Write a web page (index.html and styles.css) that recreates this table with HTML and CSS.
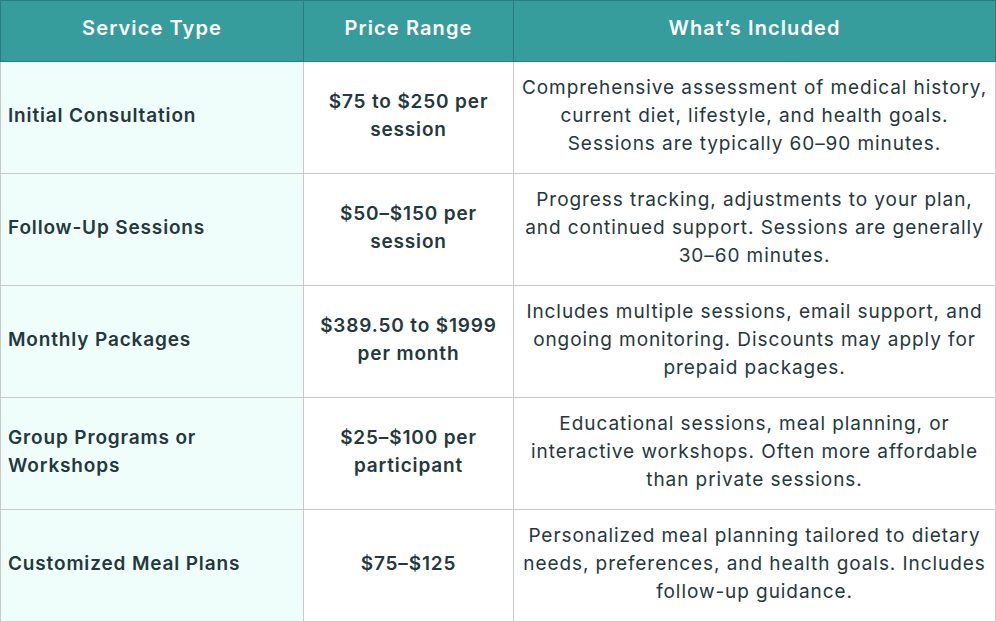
FILE: index.html
```html
<!DOCTYPE html>
<html lang="en">
<head>
<meta charset="utf-8">
<title>Nutritionist Pricing</title>
<link rel="stylesheet" href="styles.css">
</head>
<body>
<table class="pricing">
  <colgroup>
    <col class="c1"><col class="c2"><col class="c3">
  </colgroup>
  <thead>
    <tr>
      <th>Service Type</th>
      <th>Price Range</th>
      <th>What’s Included</th>
    </tr>
  </thead>
  <tbody>
    <tr>
      <td class="svc">Initial Consultation</td>
      <td class="price">$75 to $250 per session</td>
      <td class="desc">Comprehensive assessment of medical history, current diet, lifestyle, and health goals. Sessions are typically 60–90 minutes.</td>
    </tr>
    <tr>
      <td class="svc">Follow-Up Sessions</td>
      <td class="price">$50–$150 per session</td>
      <td class="desc">Progress tracking, adjustments to your plan, and continued support. Sessions are generally 30–60 minutes.</td>
    </tr>
    <tr>
      <td class="svc">Monthly Packages</td>
      <td class="price">$389.50 to $1999 per month</td>
      <td class="desc">Includes multiple sessions, email support, and ongoing monitoring. Discounts may apply for prepaid packages.</td>
    </tr>
    <tr>
      <td class="svc">Group Programs or Workshops</td>
      <td class="price">$25–$100 per participant</td>
      <td class="desc">Educational sessions, meal planning, or interactive workshops. Often more affordable than private sessions.</td>
    </tr>
    <tr>
      <td class="svc">Customized Meal Plans</td>
      <td class="price">$75–$125</td>
      <td class="desc">Personalized meal planning tailored to dietary needs, preferences, and health goals. Includes follow-up guidance.</td>
    </tr>
  </tbody>
</table>
</body>
</html>
```

FILE: styles.css
```css
html, body {
  margin: 0;
  padding: 0;
  background: #ffffff;
}
body {
  font-family: "Inter", "Noto Sans", sans-serif;
  color: #24383e;
}
.pricing {
  border-collapse: collapse;
  width: 995px;
  table-layout: fixed;
}
.c1 { width: 303px; }
.c2 { width: 210px; }
.c3 { width: 482px; }
.pricing th {
  background: #379d9c;
  color: #ffffff;
  font-size: 20px;
  font-weight: 600;
  letter-spacing: 1.1px;
  height: 61px;
  padding: 0 6px 6px;
  border: 1px solid #2a7d7b;
  text-align: center;
  vertical-align: middle;
  box-sizing: border-box;
}
.pricing td {
  height: 112px;
  box-sizing: border-box;
  border: 1px solid #c9c9c9;
  font-size: 19px;
  line-height: 28px;
  vertical-align: middle;
  padding: 0 7px 3px;
}
.pricing td.svc {
  background: #effefb;
  font-weight: 600;
  letter-spacing: 0.85px;
  text-align: left;
}
.pricing td.price {
  font-weight: 600;
  letter-spacing: 0.85px;
  text-align: center;
  padding: 0 10px 3px;
}
.pricing td.desc {
  font-weight: 400;
  letter-spacing: 0.93px;
  text-align: center;
  padding: 0 6px 3px;
}
```
